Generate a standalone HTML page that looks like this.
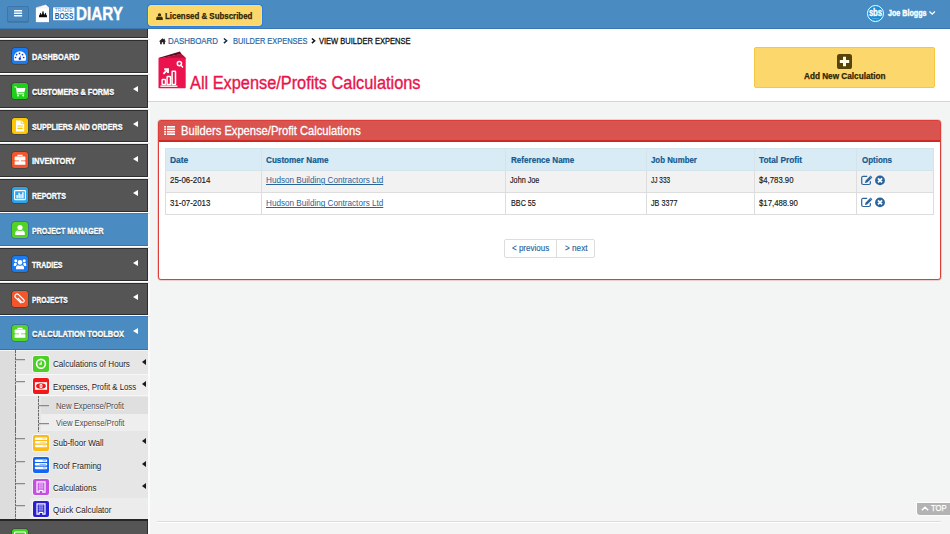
<!DOCTYPE html>
<html lang="en">
<head>
<meta charset="utf-8">
<title>Tradie Boss Diary - All Expense/Profits Calculations</title>
<style>
*{box-sizing:border-box;margin:0;padding:0}
html,body{width:950px;height:534px;overflow:hidden}
body{position:relative;background:#f3f5f4;font-family:"Liberation Sans",sans-serif;font-size:9px;color:#333}
.t{position:absolute;display:inline-block;white-space:nowrap;line-height:1;transform-origin:0 50%}
.abs{position:absolute}
svg{position:absolute;overflow:visible}

/* ---------- top bar ---------- */
#hdr{position:absolute;left:0;top:0;width:950px;height:29px;background:#4a8bc2;border-bottom:1px solid #3b78b3}
#burger{position:absolute;left:7px;top:6px;width:22px;height:16px;background:#4785bd;border:1px solid #3d76ab;border-radius:2px;box-shadow:0 1px 0 rgba(0,0,0,.12)}
.bl{position:absolute;left:14px;width:8px;height:2px;background:#fff;opacity:.92}
#lic{position:absolute;left:148px;top:5px;width:114px;height:21px;background:#fcd76b;border:1px solid #ffe45a;border-radius:3px;box-shadow:0 0 0 1px #2c7fdc}
#avatar{position:absolute;left:866.5px;top:5px;width:17.4px;height:17.4px;border-radius:50%;background:#178fd8;border:1.4px solid #fff}

/* ---------- sidebar ---------- */
#side{position:absolute;left:0;top:29px;width:148px;height:505px;background:#555;border-right:1px solid #2e2e2e}
.sep{position:absolute;left:0;width:148px;height:4px;background:#2d2d2d}
.sep:after{content:"";position:absolute;left:0;top:1px;width:149.5px;height:2px;background:linear-gradient(#fff 0,#fff 55%,#c9c9c9 100%)}
.act{position:absolute;left:0;width:148px;background:#4a8bc2;box-shadow:inset 0 1px 0 #3b7cc4,inset 0 -1px 0 #2f72c0}
.ic{position:absolute;left:12px;width:16px;height:16px;border-radius:2.5px;box-shadow:0 0 0 .5px rgba(0,0,0,.35)}
.arr{position:absolute;left:133px;width:0;height:0;border-top:3.7px solid transparent;border-bottom:3.7px solid transparent;border-right:5px solid #fff}
#sub{position:absolute;left:0;top:350px;width:148px;height:169px;background:#e6e6e6;border-top:1px solid #f4f4f4}
#sub .arr{left:141.5px;border-right-color:#222;border-top-width:3px;border-bottom-width:3px;border-right-width:4px}

.tick{position:absolute;height:1px;background:#8a8a8a;box-shadow:0 .5px 0 rgba(138,138,138,.5)}
.vline{position:absolute;width:1px;background:repeating-linear-gradient(#6a6a6a 0,#6a6a6a 2.5px,rgba(106,106,106,.3) 2.5px,rgba(106,106,106,.3) 3.5px)}

/* ---------- content ---------- */
#phead{position:absolute;left:148px;top:29px;width:802px;height:73px;background:#fff;border-bottom:1px solid #d3d8d6}
#addbtn{position:absolute;left:754px;top:47px;width:181px;height:41px;background:#fcd76b;border:1px solid #f7c744;border-radius:2px}
#panel{position:absolute;left:158px;top:120px;width:783px;height:160px;background:#fff;border:1px solid #dc3f39;border-radius:3px;box-shadow:0 0 0 .5px rgba(222,74,67,.45)}
#panelh{position:absolute;left:159px;top:121px;width:781px;height:21px;background:#d9534f;border-bottom:2px solid #cd2925}
table{position:absolute;left:165px;top:148px;width:768px;border-collapse:collapse;table-layout:fixed}
th,td{height:22px;border:1px solid #ddd;padding:0}
thead th{background:#d9ecf5;height:22px;border-color:#d5e3ea}
tbody tr:nth-child(1) td{background:#f2f2f2}
tbody tr:nth-child(2) td{background:#fff}
#pager{position:absolute;left:504px;top:239px;width:91px;height:19px;background:#fff;border:1px solid #ddd;border-radius:2px}
#pagerdiv{position:absolute;left:556px;top:240px;width:1px;height:17px;background:#ddd}
#top{position:absolute;left:917px;top:503px;width:36px;height:12px;background:#b3b3b3;border-radius:0 0 3px 3px;box-shadow:0 0 0 1px rgba(255,255,255,.8)}
#fline{position:absolute;left:157px;top:521px;width:784px;height:1px;background:#dcdedd;box-shadow:0 1px 0 #fff}
#fgrad{position:absolute;left:149px;top:503px;width:801px;height:31px;background:#f4f4f4}
#sub ~ .sarr,.sarr{left:141.5px;border-right-color:#1a1a1a;border-top-width:3px;border-bottom-width:3px;border-right-width:4px}
.sic{box-shadow:0 0 0 1px rgba(255,255,255,.55);border-radius:2px}
#strip{position:absolute;left:148px;top:29px;width:2px;height:505px;background:#fcfcfc}

</style>
</head>
<body>
<main>
  <div id="fgrad"></div>
  <div id="strip"></div>
  <div id="phead"></div>

  <!-- breadcrumb -->
  <svg style="left:159px;top:37.5px" width="7" height="6.5" viewBox="0 0 14 13"><path d="M7 0.5 L0.3 6.6 L1.3 7.7 L2.2 6.9 V12.5 H5.7 V8.6 H8.3 V12.5 H11.8 V6.9 L12.7 7.7 L13.7 6.6 L11.6 4.7 V1.4 H9.8 V3 Z" fill="#222"/></svg>
  <span class="t" id="t0" style="left:168.00px;top:36.68px;font-size:9px;font-weight:400;color:#2868a6;transform:scaleX(0.8770);-webkit-text-stroke:.2px #2868a6;">DASHBOARD</span>
  <svg style="left:222.6px;top:38px" width="5" height="5.6" viewBox="0 0 5 5.6"><path d="M0.9 0.5 L3.6 2.8 L0.9 5.1" fill="none" stroke="#152c47" stroke-width="1.5"/></svg>
  <span class="t" id="t1" style="left:232.50px;top:36.68px;font-size:9px;font-weight:400;color:#2868a6;transform:scaleX(0.8275);-webkit-text-stroke:.2px #2868a6;">BUILDER EXPENSES</span>
  <svg style="left:311px;top:38px" width="5" height="5.6" viewBox="0 0 5 5.6"><path d="M0.9 0.5 L3.6 2.8 L0.9 5.1" fill="none" stroke="#111" stroke-width="1.5"/></svg>
  <span class="t" id="t2" style="left:318.60px;top:36.68px;font-size:9px;font-weight:400;color:#111;transform:scaleX(0.8345);-webkit-text-stroke:.3px #111;">VIEW BUILDER EXPENSE</span>

  <!-- page title -->
  <svg style="left:158px;top:51px" width="29" height="38" viewBox="0 0 29 38">
    <polygon points="1,6.8 22,0.6 23.4,3 2,7.5" fill="#5c0a20"/>
    <polygon points="2,7.2 23.4,2.8 25.6,4.8 27.6,6.8 27.6,8 2,8" fill="#b40f3a"/>
    <rect x="0.5" y="6.8" width="27.2" height="30.4" rx="0.8" fill="#ea134d"/>
    <circle cx="21.4" cy="12.6" r="2.1" fill="none" stroke="#fff" stroke-width="1.5"/>
    <path d="M22.9 14.2 L24.6 16" stroke="#fff" stroke-width="1.4" stroke-linecap="round"/>
    <path d="M5.4 22.8 L9.2 19 M6.2 18.3 H10 V22.1" stroke="#fff" stroke-width="1.9" fill="none"/>
    <rect x="4.1" y="28.6" width="3.4" height="4.9" rx=".6" fill="none" stroke="#fff" stroke-width="1.5"/>
    <rect x="9.1" y="25.6" width="3.4" height="7.9" rx=".6" fill="none" stroke="#fff" stroke-width="1.5"/>
    <rect x="14.1" y="20.2" width="3.4" height="13.3" rx=".6" fill="none" stroke="#fff" stroke-width="1.5"/>
    <rect x="2.4" y="34.5" width="17" height="1.4" fill="#fff"/>
  </svg>
  <h1><span class="t" id="t3" style="left:190.00px;top:73.54px;font-size:18.5px;font-weight:400;color:#e8144b;transform:scaleX(0.8825);-webkit-text-stroke:.35px #e8144b;">All Expense/Profits Calculations</span></h1>

  <!-- add button -->
  <div id="addbtn"></div>
  <svg style="left:836.5px;top:54px" width="15" height="15" viewBox="0 0 15 15"><rect x="0" y="0" width="15" height="15" rx="2.6" fill="#574208"/><path d="M6 2.8 H9 V6 H12.2 V9 H9 V12.2 H6 V9 H2.8 V6 H6 Z" fill="#fffbe6"/></svg>
  <span class="t" id="t4" style="left:803.70px;top:71.68px;font-size:9px;font-weight:700;color:#2f2403;transform:scaleX(0.9105);-webkit-text-stroke:.25px #2f2403;">Add New Calculation</span>

  <!-- panel -->
  <section>
    <div id="panel"></div>
    <div id="panelh"></div>
    <svg style="left:164px;top:126.3px" width="11.2" height="9" viewBox="0 0 23 19"><g fill="#fff"><rect x="0" y="0" width="4" height="3.4"/><rect x="6" y="0" width="17" height="3.4"/><rect x="0" y="5.2" width="4" height="3.4"/><rect x="6" y="5.2" width="17" height="3.4"/><rect x="0" y="10.4" width="4" height="3.4"/><rect x="6" y="10.4" width="17" height="3.4"/><rect x="0" y="15.6" width="4" height="3.4"/><rect x="6" y="15.6" width="17" height="3.4"/></g></svg>
    <h2><span class="t" id="t5" style="left:181.00px;top:124.00px;font-size:13px;font-weight:400;color:#fff;transform:scaleX(0.8580);-webkit-text-stroke:.3px #fff;">Builders Expense/Profit Calculations</span></h2>

    <table>
      <colgroup><col style="width:96px"><col style="width:244px"><col style="width:141px"><col style="width:108px"><col style="width:102px"><col style="width:77px"></colgroup>
      <thead><tr><th></th><th></th><th></th><th></th><th></th><th></th></tr></thead>
      <tbody>
        <tr><td></td><td></td><td></td><td></td><td></td><td></td></tr>
        <tr><td></td><td></td><td></td><td></td><td></td><td></td></tr>
      </tbody>
    </table>
    <span class="t" id="t6" style="left:170.00px;top:155.68px;font-size:9px;font-weight:700;color:#145a90;transform:scaleX(0.9377);-webkit-text-stroke:.2px #145a90;">Date</span>
    <span class="t" id="t7" style="left:266.40px;top:155.68px;font-size:9px;font-weight:700;color:#145a90;transform:scaleX(0.9054);-webkit-text-stroke:.2px #145a90;">Customer Name</span>
    <span class="t" id="t8" style="left:510.50px;top:155.68px;font-size:9px;font-weight:700;color:#145a90;transform:scaleX(0.8973);-webkit-text-stroke:.2px #145a90;">Reference Name</span>
    <span class="t" id="t9" style="left:651.40px;top:155.68px;font-size:9px;font-weight:700;color:#145a90;transform:scaleX(0.8740);-webkit-text-stroke:.2px #145a90;">Job Number</span>
    <span class="t" id="t10" style="left:759.30px;top:155.68px;font-size:9px;font-weight:700;color:#145a90;transform:scaleX(0.9183);-webkit-text-stroke:.2px #145a90;">Total Profit</span>
    <span class="t" id="t11" style="left:861.60px;top:155.68px;font-size:9px;font-weight:700;color:#145a90;transform:scaleX(0.8824);-webkit-text-stroke:.2px #145a90;">Options</span>

    <span class="t" id="t12" style="left:170.00px;top:175.78px;font-size:9px;font-weight:400;color:#161616;transform:scaleX(0.8774);-webkit-text-stroke:.15px #161616;">25-06-2014</span>
    <span class="t" id="t13" style="left:266.40px;top:175.78px;font-size:9px;font-weight:400;color:#2a6496;transform:scaleX(0.9052);text-decoration:underline;">Hudson Building Contractors Ltd</span>
    <span class="t" id="t14" style="left:510.00px;top:175.78px;font-size:9px;font-weight:400;color:#161616;transform:scaleX(0.8048);-webkit-text-stroke:.15px #161616;">John Joe</span>
    <span class="t" id="t15" style="left:651.40px;top:175.78px;font-size:9px;font-weight:400;color:#161616;transform:scaleX(0.7237);-webkit-text-stroke:.15px #161616;">JJ 333</span>
    <span class="t" id="t16" style="left:759.30px;top:175.78px;font-size:9px;font-weight:400;color:#161616;transform:scaleX(0.8615);-webkit-text-stroke:.15px #161616;">$4,783.90</span>

    <span class="t" id="t17" style="left:170.00px;top:199.38px;font-size:9px;font-weight:400;color:#161616;transform:scaleX(0.8774);-webkit-text-stroke:.15px #161616;">31-07-2013</span>
    <span class="t" id="t18" style="left:266.40px;top:199.38px;font-size:9px;font-weight:400;color:#2a6496;transform:scaleX(0.9052);text-decoration:underline;">Hudson Building Contractors Ltd</span>
    <span class="t" id="t19" style="left:510.50px;top:199.38px;font-size:9px;font-weight:400;color:#161616;transform:scaleX(0.8024);-webkit-text-stroke:.15px #161616;">BBC 55</span>
    <span class="t" id="t20" style="left:651.40px;top:199.38px;font-size:9px;font-weight:400;color:#161616;transform:scaleX(0.7992);-webkit-text-stroke:.15px #161616;">JB 3377</span>
    <span class="t" id="t21" style="left:759.30px;top:199.38px;font-size:9px;font-weight:400;color:#161616;transform:scaleX(0.8635);-webkit-text-stroke:.15px #161616;">$17,488.90</span>

    <!-- row action icons -->
    <svg style="left:861px;top:174.6px" width="24" height="11" viewBox="0 0 24 11"><use href="#opt"/></svg>
    <svg style="left:861px;top:197px" width="24" height="11" viewBox="0 0 24 11"><use href="#opt"/></svg>

    <div id="pager"></div><div id="pagerdiv"></div>
    <span class="t" id="t22" style="left:512.30px;top:244.38px;font-size:9px;font-weight:400;color:#2a65a0;transform:scaleX(0.8904);-webkit-text-stroke:.15px #2a65a0;">&lt; previous</span>
    <span class="t" id="t23" style="left:564.50px;top:244.38px;font-size:9px;font-weight:400;color:#2a65a0;transform:scaleX(0.9079);-webkit-text-stroke:.15px #2a65a0;">&gt; next</span>
  </section>

  <div id="fline"></div>
  <div id="top"></div>
  <svg style="left:920.5px;top:505.5px" width="8" height="5" viewBox="0 0 8 5"><path d="M0.8 4.3 L4 1.2 L7.2 4.3" fill="none" stroke="#fff" stroke-width="1.5"/></svg>
  <span class="t" id="t24" style="left:930.50px;top:504.20px;font-size:8.5px;font-weight:400;color:#fff;transform:scaleX(0.8945);-webkit-text-stroke:.25px #fff;">TOP</span>
</main>

<svg width="0" height="0" style="left:-10px;top:-10px">
  <defs>
    <g id="opt">
      <path d="M6.2 1.3 H2.2 Q0.7 1.3 0.7 2.8 V8 Q0.7 9.5 2.2 9.5 H7.9 Q9.4 9.5 9.4 8 V6.2" fill="none" stroke="#2a639d" stroke-width="1.2"/>
      <path d="M3.9 7.9 L4.5 5.7 L9.6 0.6 L11.4 2.4 L6.2 7.4 Z" fill="#2a639d"/>
      <path d="M8.9 1.6 L10.5 3.2" stroke="#e9eef4" stroke-width=".55"/>
      <circle cx="19" cy="5.4" r="4.9" fill="#2a639d"/>
      <path d="M17 3.4 L21 7.4 M21 3.4 L17 7.4" stroke="#fff" stroke-width="1.8"/>
    </g>
  </defs>
</svg>

<nav>
  <div id="side"></div>
  <div class="sep" style="top:37.4px"></div>
  <div class="sep" style="top:72.0px"></div>
  <div class="sep" style="top:106.7px"></div>
  <div class="sep" style="top:141.3px"></div>
  <div class="sep" style="top:176.0px"></div>
  <div class="sep" style="top:210.7px"></div>
  <div class="sep" style="top:245.3px"></div>
  <div class="sep" style="top:279.9px"></div>
  <div class="sep" style="top:313.9px"></div>
  <svg class="ic" style="top:48.4px;background:#1a7af2" width="16" height="16" viewBox="0 0 16 16"><path d="M2.5 12.8 Q1.7 11.2 1.9 9.4 A6.1 6.1 0 0 1 14.1 9.4 Q14.3 11.2 13.5 12.8 Z" fill="#fff"/><g fill="#0a3af0"><circle cx="3.5" cy="9.5" r=".85"/><circle cx="4.6" cy="6.6" r=".85"/><circle cx="7.5" cy="5.4" r=".85"/><circle cx="10.5" cy="6.6" r=".85"/><circle cx="11.7" cy="9.5" r=".85"/><circle cx="7.8" cy="10.7" r="1.2"/><path d="M7.2 10.5 L8.6 7 L8.5 10.8 Z"/></g></svg>
  <span class="t" id="t25" style="left:32.20px;top:53.38px;font-size:9px;font-weight:700;color:#fff;transform:scaleX(0.8120);text-shadow:0 1px 1px rgba(0,0,0,.8);-webkit-text-stroke:.4px #fff;">DASHBOARD</span>
  <svg class="ic" style="top:83.0px;background:#1fd01a" width="16" height="16" viewBox="0 0 16 16"><path d="M2.4 3.6 H4.4 L5 5 H13.4 L12.4 9.2 H5.8 L5.9 10.2 H12.2 V11.2 H4.9 L4 4.6 H2.4 Z" fill="#fff"/><circle cx="6" cy="12.4" r="1" fill="#fff"/><circle cx="11.2" cy="12.4" r="1" fill="#fff"/></svg>
  <span class="t" id="t26" style="left:32.20px;top:88.03px;font-size:9px;font-weight:700;color:#fff;transform:scaleX(0.8091);text-shadow:0 1px 1px rgba(0,0,0,.8);-webkit-text-stroke:.4px #fff;">CUSTOMERS &amp; FORMS</span>
  <div class="arr" style="top:86.3px"></div>
  <svg class="ic" style="top:117.7px;background:#fbc707" width="16" height="16" viewBox="0 0 16 16"><path d="M4 2.6 H9.4 L12.2 5.4 V13.4 H4 Z" fill="#fff"/><path d="M9.2 2.6 V5.6 H12.2" fill="none" stroke="#fbc707" stroke-width=".8"/><path d="M5.4 8 H10.8 M5.4 10.4 H10.8" stroke="#fbc707" stroke-width="1.1"/></svg>
  <span class="t" id="t27" style="left:32.20px;top:122.68px;font-size:9px;font-weight:700;color:#fff;transform:scaleX(0.7960);text-shadow:0 1px 1px rgba(0,0,0,.8);-webkit-text-stroke:.4px #fff;">SUPPLIERS AND ORDERS</span>
  <div class="arr" style="top:121.0px"></div>
  <svg class="ic" style="top:152.3px;background:#f4552a" width="16" height="16" viewBox="0 0 16 16"><path d="M6 4.6 V3.4 H10 V4.6" fill="none" stroke="#fff" stroke-width="1.1"/><rect x="2.6" y="4.6" width="10.8" height="4" rx=".8" fill="#fff"/><rect x="2.6" y="9.2" width="10.8" height="3.6" rx=".6" fill="#fff"/><rect x="7" y="8" width="2" height="2" fill="#fff"/></svg>
  <span class="t" id="t28" style="left:32.20px;top:157.33px;font-size:9px;font-weight:700;color:#fff;transform:scaleX(0.8382);text-shadow:0 1px 1px rgba(0,0,0,.8);-webkit-text-stroke:.4px #fff;">INVENTORY</span>
  <div class="arr" style="top:155.7px"></div>
  <svg class="ic" style="top:187.0px;background:#2fa3ea" width="16" height="16" viewBox="0 0 16 16"><rect x="2.6" y="3.6" width="10.8" height="9" rx=".8" fill="none" stroke="#fff" stroke-width="1.1"/><path d="M5.1 11.6 V8 M7.1 11.6 V5.8 M9 11.6 V7.2 M10.9 11.6 V5.2" stroke="#fff" stroke-width="1.4"/></svg>
  <span class="t" id="t29" style="left:32.20px;top:191.98px;font-size:9px;font-weight:700;color:#fff;transform:scaleX(0.7767);text-shadow:0 1px 1px rgba(0,0,0,.8);-webkit-text-stroke:.4px #fff;">REPORTS</span>
  <div class="arr" style="top:190.3px"></div>
  <div class="act" style="top:213px;height:33px"></div>
  <svg class="ic" style="top:221.7px;background:#52d325" width="16" height="16" viewBox="0 0 16 16"><circle cx="8" cy="5.6" r="2.6" fill="#fff"/><path d="M3.2 13 V11.2 Q3.2 8.6 5.8 8.4 Q8 9.8 10.2 8.4 Q12.8 8.6 12.8 11.2 V13 Z" fill="#fff"/></svg>
  <span class="t" id="t30" style="left:32.20px;top:226.63px;font-size:9px;font-weight:700;color:#fff;transform:scaleX(0.7824);text-shadow:0 1px 1px rgba(0,0,0,.8);-webkit-text-stroke:.4px #fff;">PROJECT MANAGER</span>
  <svg class="ic" style="top:256.3px;background:#1a7af2" width="16" height="16" viewBox="0 0 16 16"><circle cx="8" cy="6.4" r="2.3" fill="#fff"/><path d="M4 13.2 V11.6 Q4 9.4 6 9.2 Q8 10.4 10 9.2 Q12 9.4 12 11.6 V13.2 Z" fill="#fff"/><circle cx="3.8" cy="4.8" r="1.5" fill="#fff"/><circle cx="12.2" cy="4.8" r="1.5" fill="#fff"/><path d="M1.8 10 V8.4 Q1.8 7 3.2 6.8 Q4.6 7.4 5 7.8 Q4.6 9 3.6 10 Z M14.2 10 V8.4 Q14.2 7 12.8 6.8 Q11.4 7.4 11 7.8 Q11.4 9 12.4 10 Z" fill="#fff"/></svg>
  <span class="t" id="t31" style="left:32.20px;top:261.28px;font-size:9px;font-weight:700;color:#fff;transform:scaleX(0.7693);text-shadow:0 1px 1px rgba(0,0,0,.8);-webkit-text-stroke:.4px #fff;">TRADIES</span>
  <div class="arr" style="top:259.6px"></div>
  <svg class="ic" style="top:290.9px;background:#f4552a" width="16" height="16" viewBox="0 0 16 16"><path d="M6.2 7.4 L9.6 10.8 A1.5 1.5 0 0 0 11.8 8.7 L6.6 3.6 A2.1 2.1 0 0 0 3.6 6.6 L8.9 11.9" fill="none" stroke="#fff" stroke-width="1.2" stroke-linecap="round"/></svg>
  <span class="t" id="t32" style="left:32.20px;top:295.93px;font-size:9px;font-weight:700;color:#fff;transform:scaleX(0.7338);text-shadow:0 1px 1px rgba(0,0,0,.8);-webkit-text-stroke:.4px #fff;">PROJECTS</span>
  <div class="arr" style="top:294.2px"></div>
  <div class="act" style="top:316px;height:34px"></div>
  <svg class="ic" style="top:324.9px;background:#52d325" width="16" height="16" viewBox="0 0 16 16"><path d="M6 4.6 V3.4 H10 V4.6" fill="none" stroke="#fff" stroke-width="1.1"/><rect x="2.6" y="4.6" width="10.8" height="4" rx=".8" fill="#fff"/><rect x="2.6" y="9.2" width="10.8" height="3.6" rx=".6" fill="#fff"/><rect x="7" y="8" width="2" height="2" fill="#fff"/></svg>
  <span class="t" id="t33" style="left:32.20px;top:329.88px;font-size:9px;font-weight:700;color:#fff;transform:scaleX(0.8275);text-shadow:0 1px 1px rgba(0,0,0,.8);-webkit-text-stroke:.4px #fff;">CALCULATION TOOLBOX</span>
  <div class="arr" style="top:328.2px"></div>
  <div id="sub"></div>
  <div class="abs" style="left:0;top:351px;width:15px;height:168px;background:#dddddd"></div>
  <div class="abs" style="left:15px;top:374px;width:133px;height:22px;background:#ededed;border-top:1px solid #f6f6f6;border-bottom:1px solid #f6f6f6"></div>
  <div class="abs" style="left:41px;top:397px;width:107px;height:17px;background:#dfdfdf"></div>
  <div class="abs" style="left:41px;top:414px;width:107px;height:17px;background:#eeeeee"></div>
  <div class="abs" style="left:30px;top:498px;width:118px;height:21px;background:#ececec"></div>
  <div class="vline" style="left:15px;top:350px;height:169px"></div>
  <div class="vline" style="left:38px;top:396px;height:36px"></div>
  <div class="tick" style="left:16px;top:359.2px;width:9px"></div>
  <svg class="ic sic" style="left:33px;top:355.8px;background:#4dcf27" width="15" height="15" viewBox="0 0 16 16"><circle cx="8" cy="7.8" r="4.4" fill="none" stroke="#fff" stroke-width="1.6"/><path d="M8.2 5.4 V8.2 H6.2" fill="none" stroke="#fff" stroke-width="1.2"/></svg>
  <span class="t" id="t34" style="left:52.80px;top:359.36px;font-size:9.5px;font-weight:400;color:#1c1c1c;transform:scaleX(0.8516);text-shadow:0 1px 0 #fff;">Calculations of Hours</span>
  <div class="arr sarr" style="top:359.2px"></div>
  <div class="tick" style="left:16px;top:381.4px;width:9px"></div>
  <svg class="ic sic" style="left:33px;top:378.0px;background:#f4171a" width="15" height="15" viewBox="0 0 16 16"><rect x="1.9" y="4.2" width="12.2" height="7.6" fill="#fff"/><ellipse cx="8" cy="8" rx="4.9" ry="2.7" fill="#f4171a"/><ellipse cx="8" cy="8" rx="1.5" ry="2.2" fill="#fff"/><path d="M8 6.6 V9.4" stroke="#f4171a" stroke-width=".7"/></svg>
  <span class="t" id="t35" style="left:52.80px;top:381.56px;font-size:9.5px;font-weight:400;color:#1c1c1c;transform:scaleX(0.8249);text-shadow:0 1px 0 #fff;">Expenses, Profit &amp; Loss</span>
  <div class="arr sarr" style="top:381.4px"></div>
  <div class="tick" style="left:16px;top:438.2px;width:9px"></div>
  <svg class="ic sic" style="left:33px;top:434.8px;background:#fbbb14" width="15" height="15" viewBox="0 0 16 16"><g fill="#fff"><rect x="1.8" y="2.5" width="12.4" height="2.5" rx="1.1"/><rect x="1.8" y="6.1" width="12.4" height="2.5" rx="1.1"/><rect x="1.8" y="9.7" width="12.4" height="2.5" rx="1.1"/></g><g fill="#fbbb14" opacity=".5"><rect x="9.5" y="3.2" width="3.4" height="1.1"/><rect x="6.6" y="6.8" width="6.2" height="1.1"/><rect x="9.8" y="10.4" width="3" height="1.1"/></g></svg>
  <span class="t" id="t36" style="left:52.80px;top:438.36px;font-size:9.5px;font-weight:400;color:#1c1c1c;transform:scaleX(0.8531);text-shadow:0 1px 0 #fff;">Sub-floor Wall</span>
  <div class="arr sarr" style="top:438.2px"></div>
  <div class="tick" style="left:16px;top:460.7px;width:9px"></div>
  <svg class="ic sic" style="left:33px;top:457.3px;background:#1467f5" width="15" height="15" viewBox="0 0 16 16"><g fill="#fff"><rect x="1.8" y="2.5" width="12.4" height="2.5" rx="1.1"/><rect x="1.8" y="6.1" width="12.4" height="2.5" rx="1.1"/><rect x="1.8" y="9.7" width="12.4" height="2.5" rx="1.1"/></g><g fill="#1467f5" opacity=".5"><rect x="9.5" y="3.2" width="3.4" height="1.1"/><rect x="6.6" y="6.8" width="6.2" height="1.1"/><rect x="9.8" y="10.4" width="3" height="1.1"/></g></svg>
  <span class="t" id="t37" style="left:52.80px;top:460.86px;font-size:9.5px;font-weight:400;color:#1c1c1c;transform:scaleX(0.8391);text-shadow:0 1px 0 #fff;">Roof Framing</span>
  <div class="arr sarr" style="top:460.7px"></div>
  <div class="tick" style="left:16px;top:482.7px;width:9px"></div>
  <svg class="ic sic" style="left:33px;top:479.3px;background:#c44fe0" width="15" height="15" viewBox="0 0 16 16"><path d="M4 13.2 V2.8 H12 V13.2 H9.8 V11.4 H6.2 V13.2 Z" fill="none" stroke="#fff" stroke-width="1.2"/><path d="M5.4 4.8 H10.6 M5.4 6.8 H10.6 M5.4 8.8 H10.6 M6.7 3.4 V10 M8 3.4 V10 M9.3 3.4 V10" stroke="#fff" stroke-width=".5" opacity=".75"/></svg>
  <span class="t" id="t38" style="left:52.80px;top:482.86px;font-size:9.5px;font-weight:400;color:#1c1c1c;transform:scaleX(0.8386);text-shadow:0 1px 0 #fff;">Calculations</span>
  <div class="arr sarr" style="top:482.7px"></div>
  <div class="tick" style="left:16px;top:504.5px;width:9px"></div>
  <svg class="ic sic" style="left:33px;top:501.1px;background:#2a20cf" width="15" height="15" viewBox="0 0 16 16"><path d="M4 13.2 V2.8 H12 V13.2 H9.8 V11.4 H6.2 V13.2 Z" fill="none" stroke="#fff" stroke-width="1.2"/><path d="M5.4 4.8 H10.6 M5.4 6.8 H10.6 M5.4 8.8 H10.6 M6.7 3.4 V10 M8 3.4 V10 M9.3 3.4 V10" stroke="#fff" stroke-width=".5" opacity=".75"/></svg>
  <span class="t" id="t39" style="left:52.80px;top:504.66px;font-size:9.5px;font-weight:400;color:#1c1c1c;transform:scaleX(0.8378);text-shadow:0 1px 0 #fff;">Quick Calculator</span>
  <div class="tick" style="left:39px;top:405px;width:10px"></div>
  <span class="t" id="t40" style="left:56.20px;top:402.38px;font-size:9px;font-weight:400;color:#4a4a4a;transform:scaleX(0.8602);text-shadow:0 1px 0 #fff;">New Expense/Profit</span>
  <div class="tick" style="left:39px;top:423px;width:10px"></div>
  <span class="t" id="t41" style="left:56.20px;top:418.78px;font-size:9px;font-weight:400;color:#4a4a4a;transform:scaleX(0.8521);text-shadow:0 1px 0 #fff;">View Expense/Profit</span>
  <div class="abs" style="left:0;top:519px;width:148px;height:2px;background:#262626"></div>
  <svg class="ic" style="top:528.6px;background:#3fd21f" width="16" height="16" viewBox="0 0 16 16"><rect x="2.6" y="3" width="10.8" height="8" rx=".8" fill="none" stroke="#fff" stroke-width="1.2"/></svg>
</nav>

<header>
  <div id="hdr"></div>
  <div id="burger"></div>
  <svg style="left:14px;top:10px" width="8.2" height="6.6" viewBox="0 0 8.2 6.6"><rect x="0" y="0" width="8.2" height="1.6" rx=".4" fill="#fff"/><rect x="0" y="2.45" width="8.2" height="1.6" rx=".4" fill="#fff"/><rect x="0" y="4.9" width="8.2" height="1.6" rx=".4" fill="#fff"/></svg>

  <!-- logo -->
  <svg style="left:35px;top:3.5px" width="90" height="19" viewBox="0 0 90 19">
    <path d="M0.8 3.7 L10.8 0.7 L14 3.5 V18.3 H0.8 Z" fill="#fff" stroke="#3675ba" stroke-width="1" paint-order="stroke"/>
    <path d="M1.6 3.5 L10.7 0.9 L12 2" fill="none" stroke="#f3d9b8" stroke-width=".6"/>
    <path d="M0.8 3.8 H14" stroke="#c9d9ea" stroke-width=".4"/>
    <path d="M4 13.3 Q3.8 10.6 5 10.2 Q4.5 8.9 5.4 8.8 Q6.3 8.9 5.8 10.2 Q6.3 10.3 6.6 10.8 Q6.6 9.4 7.4 9.2 Q6.8 7.4 8 7.3 Q9.2 7.4 8.6 9.2 Q9.4 9.4 9.4 10.8 Q9.7 10.3 10.2 10.2 Q9.7 8.9 10.6 8.8 Q11.5 8.9 11 10.2 Q12.2 10.6 12 13.3 Z" fill="#0c0c0c"/>
    <rect x="18" y="3.4" width="21.5" height="12.9" fill="#fff" stroke="#3675ba" stroke-width=".9" paint-order="stroke"/>
    <text x="19.8" y="8.3" font-family="Liberation Sans, sans-serif" font-size="4.8" fill="#4f8fc8" textLength="17.6" lengthAdjust="spacingAndGlyphs">TRADIE</text>
    <text x="19.7" y="15.3" font-family="Liberation Sans, sans-serif" font-size="8.6" font-weight="700" fill="#1a60ad" textLength="18.6" lengthAdjust="spacingAndGlyphs">BOSS</text>
  </svg>
  <span class="t" id="t42" style="left:76.00px;top:4.79px;font-size:18.2px;font-weight:700;color:#fff;transform:scaleX(0.8405);-webkit-text-stroke:.4px #fff;">DIARY</span>

  <div id="lic"></div>
  <svg style="left:156px;top:12.6px" width="7" height="7.2" viewBox="0 0 14 14"><circle cx="7" cy="3.6" r="3.4" fill="#3a2c04"/><path d="M0.4 14 V10.6 Q0.4 7.2 4 6.8 Q7 8.8 10 6.8 Q13.6 7.2 13.6 10.6 V14 Z" fill="#3a2c04"/></svg>
  <span class="t" id="t43" style="left:165.30px;top:11.98px;font-size:9px;font-weight:700;color:#2f2403;transform:scaleX(0.8781);-webkit-text-stroke:.25px #2f2403;">Licensed &amp; Subscribed</span>

  <div id="avatar"></div>
  <span class="t" id="t44" style="left:868.90px;top:7.73px;font-size:10px;font-weight:700;color:#fff;transform:scaleX(0.7832);letter-spacing:-.3px;-webkit-text-stroke:.3px #fff;">sbs</span>
  <div class="abs" style="left:871.5px;top:18px;width:7px;height:1px;background:#7fd3f7;opacity:.45"></div>
  <span class="t" id="t45" style="left:888.00px;top:8.68px;font-size:9px;font-weight:700;color:#fff;transform:scaleX(0.7936);-webkit-text-stroke:.4px #fff;">Joe Bloggs</span>
  <svg style="left:928.6px;top:10.8px" width="6.4" height="4" viewBox="0 0 6.4 4"><path d="M0.5 0.5 L3.2 3.2 L5.9 0.5" fill="none" stroke="#fff" stroke-width="1.3"/></svg>
</header>

</body>
</html>
